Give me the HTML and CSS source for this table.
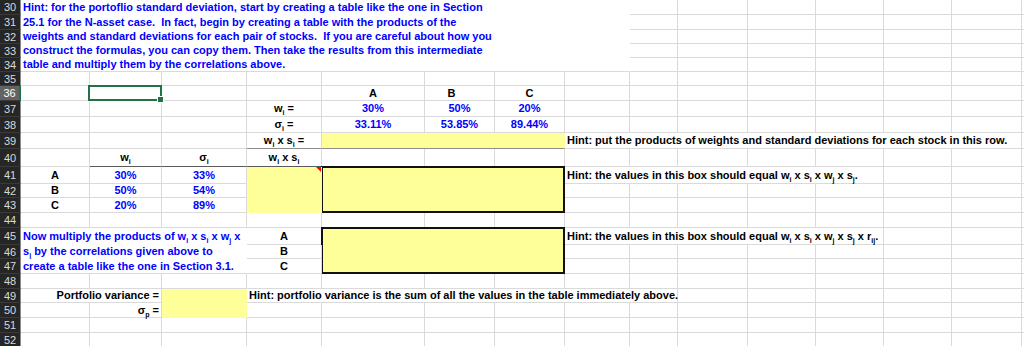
FILE: index.html
```html
<!DOCTYPE html>
<html>
<head>
<meta charset="utf-8">
<link rel="stylesheet" href="styles.css">
</head>
<body>
<div class="sheet">
<div class="h">30</div><div class="c white s8 blue"><span>Hint: for the portoflio standard deviation, start by creating a table like the one in Section</span></div><div class="c"></div><div class="c"></div><div class="c"></div><div class="c"></div><div class="c"></div><div class="c"></div><div class="c"></div>
<div class="h">31</div><div class="c white s8 blue"><span>25.1 for the N-asset case.  In fact, begin by creating a table with the products of the</span></div><div class="c"></div><div class="c"></div><div class="c"></div><div class="c"></div><div class="c"></div><div class="c"></div><div class="c"></div>
<div class="h">32</div><div class="c white s8 blue"><span>weights and standard deviations for each pair of stocks.  If you are careful about how you</span></div><div class="c"></div><div class="c"></div><div class="c"></div><div class="c"></div><div class="c"></div><div class="c"></div><div class="c"></div>
<div class="h">33</div><div class="c white s8 blue"><span>construct the formulas, you can copy them. Then take the results from this intermediate</span></div><div class="c"></div><div class="c"></div><div class="c"></div><div class="c"></div><div class="c"></div><div class="c"></div><div class="c"></div>
<div class="h">34</div><div class="c white last s8 blue"><span>table and multiply them by the correlations above.</span></div><div class="c"></div><div class="c"></div><div class="c"></div><div class="c"></div><div class="c"></div><div class="c"></div><div class="c"></div>
<div class="h">35</div><div class="c"></div><div class="c"></div><div class="c"></div><div class="c"></div><div class="c"></div><div class="c"></div><div class="c"></div><div class="c"></div><div class="c"></div><div class="c"></div><div class="c"></div><div class="c"></div><div class="c"></div><div class="c"></div><div class="c"></div>
<div class="h hs">36</div><div class="c"></div><div class="c sel"></div><div class="c"></div><div class="c"></div><div class="c ctr"><span>A</span></div><div class="c ctr"><span class="lb">B</span></div><div class="c ctr"><span>C</span></div><div class="c"></div><div class="c"></div><div class="c"></div><div class="c"></div><div class="c"></div><div class="c"></div><div class="c"></div><div class="c"></div>
<div class="h">37</div><div class="c"></div><div class="c"></div><div class="c"></div><div class="c ctr"><span>w<sub>i</sub> =</span></div><div class="c ctr blue"><span>30%</span></div><div class="c ctr blue"><span>50%</span></div><div class="c ctr blue"><span>20%</span></div><div class="c"></div><div class="c"></div><div class="c"></div><div class="c"></div><div class="c"></div><div class="c"></div><div class="c"></div><div class="c"></div>
<div class="h">38</div><div class="c"></div><div class="c"></div><div class="c"></div><div class="c ctr"><span>σ<sub>i</sub> =</span></div><div class="c ctr blue"><span>33.11%</span></div><div class="c ctr blue"><span>53.85%</span></div><div class="c ctr blue"><span>89.44%</span></div><div class="c"></div><div class="c"></div><div class="c"></div><div class="c"></div><div class="c"></div><div class="c"></div><div class="c"></div><div class="c"></div>
<div class="h">39</div><div class="c"></div><div class="c"></div><div class="c"></div><div class="c ctr gb"><span>w<sub>i</sub> x s<sub>i</sub> =</span></div><div class="c yellow gb s3"></div><div class="c s7"><span>Hint: put the products of weights and standard deviations for each stock in this row.</span></div><div class="c"></div>
<div class="h">40</div><div class="c"></div><div class="c ctr db"><span>w<sub>i</sub></span></div><div class="c ctr db"><span>σ<sub>i</sub></span></div><div class="c ctr db"><span>w<sub>i</sub> x s<sub>i</sub></span></div><div class="c"></div><div class="c"></div><div class="c"></div><div class="c"></div><div class="c"></div><div class="c"></div><div class="c"></div><div class="c"></div><div class="c"></div><div class="c"></div><div class="c"></div>
<div class="h">41</div><div class="c ctr"><span>A</span></div><div class="c ctr blue"><span>30%</span></div><div class="c ctr blue"><span>33%</span></div><div class="c yellow r3 note"></div><div class="box s3 r3"></div><div class="c s5"><span>Hint: the values in this box should equal w<sub>i</sub> x s<sub>i</sub> x w<sub>j</sub> x s<sub>j</sub>.</span></div><div class="c"></div><div class="c"></div><div class="c"></div>
<div class="h">42</div><div class="c ctr"><span>B</span></div><div class="c ctr blue"><span>50%</span></div><div class="c ctr blue"><span>54%</span></div><div class="c"></div><div class="c"></div><div class="c"></div><div class="c"></div><div class="c"></div><div class="c"></div><div class="c"></div><div class="c"></div>
<div class="h">43</div><div class="c ctr"><span>C</span></div><div class="c ctr blue"><span>20%</span></div><div class="c ctr blue"><span>89%</span></div><div class="c"></div><div class="c"></div><div class="c"></div><div class="c"></div><div class="c"></div><div class="c"></div><div class="c"></div><div class="c"></div>
<div class="h">44</div><div class="c"></div><div class="c"></div><div class="c"></div><div class="c"></div><div class="c"></div><div class="c"></div><div class="c"></div><div class="c"></div><div class="c"></div><div class="c"></div><div class="c"></div><div class="c"></div><div class="c"></div><div class="c"></div><div class="c"></div>
<div class="h">45</div><div class="c white s3 blue"><span>Now multiply the products of w<sub>i</sub> x s<sub>i</sub> x w<sub>j</sub> x</span></div><div class="c ctr"><span>A</span></div><div class="box s3 r3"></div><div class="c s5"><span>Hint: the values in this box should equal w<sub>i</sub> x s<sub>i</sub> x w<sub>j</sub> x s<sub>j</sub> x r<sub>ij</sub>.</span></div><div class="c"></div><div class="c"></div><div class="c"></div>
<div class="h">46</div><div class="c white s3 blue"><span>s<sub>j</sub> by the correlations given above to</span></div><div class="c ctr"><span>B</span></div><div class="c"></div><div class="c"></div><div class="c"></div><div class="c"></div><div class="c"></div><div class="c"></div><div class="c"></div><div class="c"></div>
<div class="h">47</div><div class="c white last s3 blue"><span>create a table like the one in Section 3.1.</span></div><div class="c ctr"><span>C</span></div><div class="c"></div><div class="c"></div><div class="c"></div><div class="c"></div><div class="c"></div><div class="c"></div><div class="c"></div><div class="c"></div>
<div class="h">48</div><div class="c"></div><div class="c"></div><div class="c"></div><div class="c"></div><div class="c"></div><div class="c"></div><div class="c"></div><div class="c"></div><div class="c"></div><div class="c"></div><div class="c"></div><div class="c"></div><div class="c"></div><div class="c"></div><div class="c"></div>
<div class="h">49</div><div class="c s2 rt"><span>Portfolio variance =</span></div><div class="c yellow r2"></div><div class="c s6"><span>Hint: portfolio variance is the sum of all the values in the table immediately above.</span></div><div class="c"></div><div class="c"></div><div class="c"></div><div class="c"></div><div class="c"></div><div class="c"></div>
<div class="h">50</div><div class="c"></div><div class="c rt"><span>σ<sub>p</sub> =</span></div><div class="c"></div><div class="c"></div><div class="c"></div><div class="c"></div><div class="c"></div><div class="c"></div><div class="c"></div><div class="c"></div><div class="c"></div><div class="c"></div><div class="c"></div><div class="c"></div>
<div class="h">51</div><div class="c"></div><div class="c"></div><div class="c"></div><div class="c"></div><div class="c"></div><div class="c"></div><div class="c"></div><div class="c"></div><div class="c"></div><div class="c"></div><div class="c"></div><div class="c"></div><div class="c"></div><div class="c"></div><div class="c"></div>
<div class="h">52</div><div class="c"></div><div class="c"></div><div class="c"></div><div class="c"></div><div class="c"></div><div class="c"></div><div class="c"></div><div class="c"></div><div class="c"></div><div class="c"></div><div class="c"></div><div class="c"></div><div class="c"></div><div class="c"></div><div class="c"></div>
</div>
</body>
</html>
```

FILE: styles.css
```css
* {
  box-sizing: border-box;
}

html, body {
  margin: 0;
  padding: 0;
  background: #ffffff;
}

body {
  width: 1024px;
  height: 346px;
  overflow: hidden;
  font: bold 11px "Liberation Sans", Arial, sans-serif;
  color: #000000;
}

.sheet {
  display: grid;
  grid-template-columns: 21px 69px 72px 85px 75px 103px 70px 70px 65px 48px 70px 68px 68px 68px 70px 2px;
  grid-template-rows: 15px 15px 14px 14px 14px 14px 15px 16px 16px 16px 18px 17px 14px 15px 15px 17px 14px 15px 15px 14px 15px 15px 15px;
}

.h {
  display: flex;
  align-items: center;
  justify-content: center;
  background: #262626;
  color: #d9d9d9;
  font-weight: normal;
  font-size: 11px;
  border-right: 1px solid #8c8c8c;
  border-bottom: 1px solid #3a3a3a;
}

.h.hs {
  background: #636363;
  color: #ffffff;
  border-right: 2px solid #217346;
}

.c {
  display: flex;
  align-items: center;
  min-width: 0;
  padding: 0 2px;
  white-space: pre;
  border-right: 1px solid #dadada;
  border-bottom: 1px solid #dadada;
}

.c > span {
  display: block;
  line-height: 13px;
}

.ctr {
  justify-content: center;
}

.rt {
  justify-content: flex-end;
}

.lb {
  margin-right: 16px;
}

.blue {
  color: #0000ff;
}

.white {
  background: #ffffff;
  border-right-color: #ffffff;
  border-bottom-color: #ffffff;
}

.white.last {
  border-bottom-color: #dadada;
}

.yellow {
  background: #ffff99;
  border-right-color: #ffff99;
  border-bottom-color: #ffff99;
}

.gb {
  border-bottom-color: #8c8c8c;
}

.db {
  border-bottom-color: #5a5a5a;
}

.box {
  background: #ffff99;
  border: 2px solid #111111;
  margin: -1px 0 0 -1px;
}

.s2 { grid-column: span 2; }
.s3 { grid-column: span 3; }
.s5 { grid-column: span 5; }
.s6 { grid-column: span 6; }
.s7 { grid-column: span 7; }
.s8 { grid-column: span 8; }
.r2 { grid-row: span 2; }
.r3 { grid-row: span 3; }

sub {
  font-size: 7px;
  line-height: 0;
  vertical-align: -3px;
}

.sel {
  position: relative;
}

.sel::before {
  content: "";
  position: absolute;
  left: -2px;
  top: -1px;
  right: -1px;
  bottom: -1px;
  border: 2px solid #217346;
}

.sel::after {
  content: "";
  position: absolute;
  right: -3px;
  bottom: -3px;
  width: 5px;
  height: 5px;
  background: #217346;
  border: 1px solid #ffffff;
}

.note {
  position: relative;
}

.note::after {
  content: "";
  position: absolute;
  top: 0;
  right: 0;
  border-top: 5px solid #ff0000;
  border-left: 5px solid transparent;
}
```
